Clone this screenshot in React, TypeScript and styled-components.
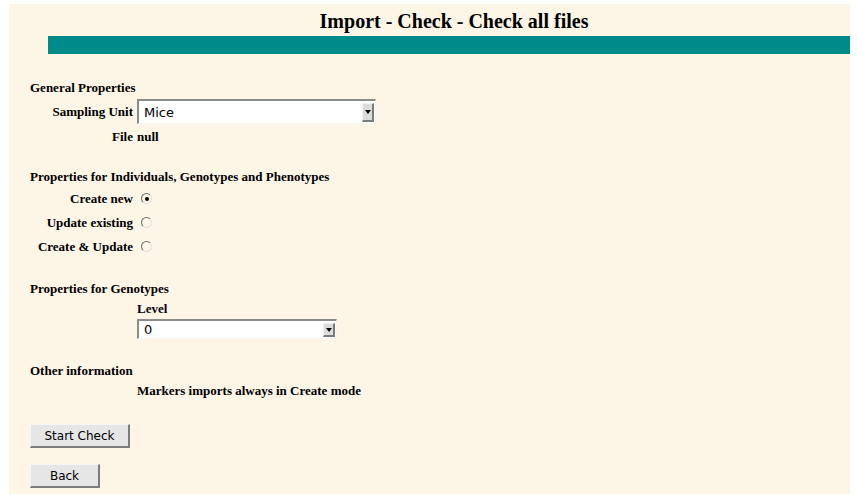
import styled, { createGlobalStyle } from "styled-components";

const GlobalStyle = createGlobalStyle`
    html, body {
        margin: 0;
        padding: 0;
        background: #ffffff;
    }
    body {
        font-family: "Liberation Serif", "Times New Roman", serif;
        color: #000;
    }
`;

const Page = styled.div`
    margin: 4px 7px 0 9px;
    height: 490px;
    background: #fdf5e6;
    box-sizing: border-box;
    padding-top: 6px;
`;

const Title = styled.h1`
    margin: 0;
    padding-left: 49px;
    text-align: center;
    font-size: 20px;
    line-height: 22px;
    font-weight: bold;
`;

const TealBar = styled.div`
    margin: 4px 0 0 39px;
    height: 18px;
    background: #008b8a;
`;

const Content = styled.div`
    padding-left: 21px;
    font-size: 13px;
    font-weight: bold;
    line-height: 15px;
`;

const SectionTitle = styled.div<{ $top: number }>`
    margin-top: ${(p) => p.$top}px;
`;

const FormGrid = styled.div<{ $rowGap?: number; $top?: number }>`
    display: grid;
    grid-template-columns: 103px auto;
    column-gap: 4px;
    row-gap: ${(p) => p.$rowGap ?? 0}px;
    margin-top: ${(p) => p.$top ?? 0}px;
    align-items: center;
    justify-content: start;
`;

const Label = styled.div`
    text-align: right;
    white-space: nowrap;
`;

const Value = styled.div`
    white-space: nowrap;
`;

const Indented = styled.div<{ $top: number }>`
    margin-left: 107px;
    margin-top: ${(p) => p.$top}px;
`;

const SelectFrame = styled.div<{ $width: number; $height: number }>`
    width: ${(p) => p.$width}px;
    height: ${(p) => p.$height}px;
    box-sizing: border-box;
    display: flex;
    align-items: stretch;
    background: #fff;
    border-style: solid;
    border-width: 2px 1px 1px 2px;
    border-color: #8c8c8c #f4f4f4 #f4f4f4 #8c8c8c;
`;

const SelectText = styled.div`
    flex: 1;
    display: flex;
    align-items: center;
    padding-left: 5px;
    font-family: "DejaVu Sans", Verdana, sans-serif;
    font-weight: normal;
    font-size: 13px;
`;

const ArrowButton = styled.div`
    width: 12px;
    margin: 2px 1px 1px 0;
    box-sizing: border-box;
    background: #dcdcdc;
    border-style: solid;
    border-width: 1px 2px 2px 1px;
    border-color: #f2f2f2 #7a7a7a #7a7a7a #f2f2f2;
    display: flex;
    align-items: center;
    justify-content: center;

    &::after {
        content: "";
        width: 0;
        height: 0;
        border-left: 3.5px solid transparent;
        border-right: 3.5px solid transparent;
        border-top: 4px solid #000;
    }
`;

const RadioRow = styled.div`
    display: contents;
`;

const Radio = styled.span<{ $checked?: boolean }>`
    width: 11px;
    height: 11px;
    box-sizing: border-box;
    border-radius: 50%;
    border: 1.5px solid;
    border-color: #6e6e6e #e2e2e2 #e2e2e2 #6e6e6e;
    background: #fdf5e6;
    display: flex;
    align-items: center;
    justify-content: center;
    margin-left: 4px;

    &::after {
        content: "";
        width: 4px;
        height: 4px;
        border-radius: 50%;
        background: ${(p) => (p.$checked ? "#000" : "transparent")};
    }
`;

const Button = styled.button<{ $width: number }>`
    display: block;
    width: ${(p) => p.$width}px;
    height: 24px;
    padding: 0;
    box-sizing: border-box;
    background: #e6e6e6;
    border-style: solid;
    border-width: 1px 2px 2px 1px;
    border-color: #f6f6f6 #7c7c7c #7c7c7c #f6f6f6;
    font-family: "DejaVu Sans", Verdana, sans-serif;
    font-size: 12px;
    color: #000;
`;

const ButtonBlock = styled.div<{ $top: number }>`
    margin-top: ${(p) => p.$top}px;
`;

const modes = [
    { label: "Create new", checked: true },
    { label: "Update existing", checked: false },
    { label: "Create & Update", checked: false },
];

const App = () => {
    return (
        <>
            <GlobalStyle />
            <Page>
                <Title>Import - Check - Check all files</Title>
                <TealBar />
                <Content>
                    <SectionTitle $top={26}>General Properties</SectionTitle>
                    <FormGrid $rowGap={5} $top={4}>
                        <Label>Sampling Unit</Label>
                        <SelectFrame $width={239} $height={25}>
                            <SelectText>Mice</SelectText>
                            <ArrowButton />
                        </SelectFrame>
                        <Label>File</Label>
                        <Value>null</Value>
                    </FormGrid>

                    <SectionTitle $top={25}>Properties for Individuals, Genotypes and Phenotypes</SectionTitle>
                    <FormGrid $rowGap={9} $top={7}>
                        {modes.map((m) => (
                            <RadioRow key={m.label}>
                                <Label>{m.label}</Label>
                                <Radio $checked={m.checked} />
                            </RadioRow>
                        ))}
                    </FormGrid>

                    <SectionTitle $top={27}>Properties for Genotypes</SectionTitle>
                    <Indented $top={5}>Level</Indented>
                    <Indented $top={3}>
                        <SelectFrame $width={200} $height={20}>
                            <SelectText>0</SelectText>
                            <ArrowButton />
                        </SelectFrame>
                    </Indented>

                    <SectionTitle $top={24}>Other information</SectionTitle>
                    <Indented $top={5}>Markers imports always in Create mode</Indented>

                    <ButtonBlock $top={26}>
                        <Button $width={100}>Start Check</Button>
                    </ButtonBlock>
                    <ButtonBlock $top={16}>
                        <Button $width={70}>Back</Button>
                    </ButtonBlock>
                </Content>
            </Page>
        </>
    );
};

export default App;
